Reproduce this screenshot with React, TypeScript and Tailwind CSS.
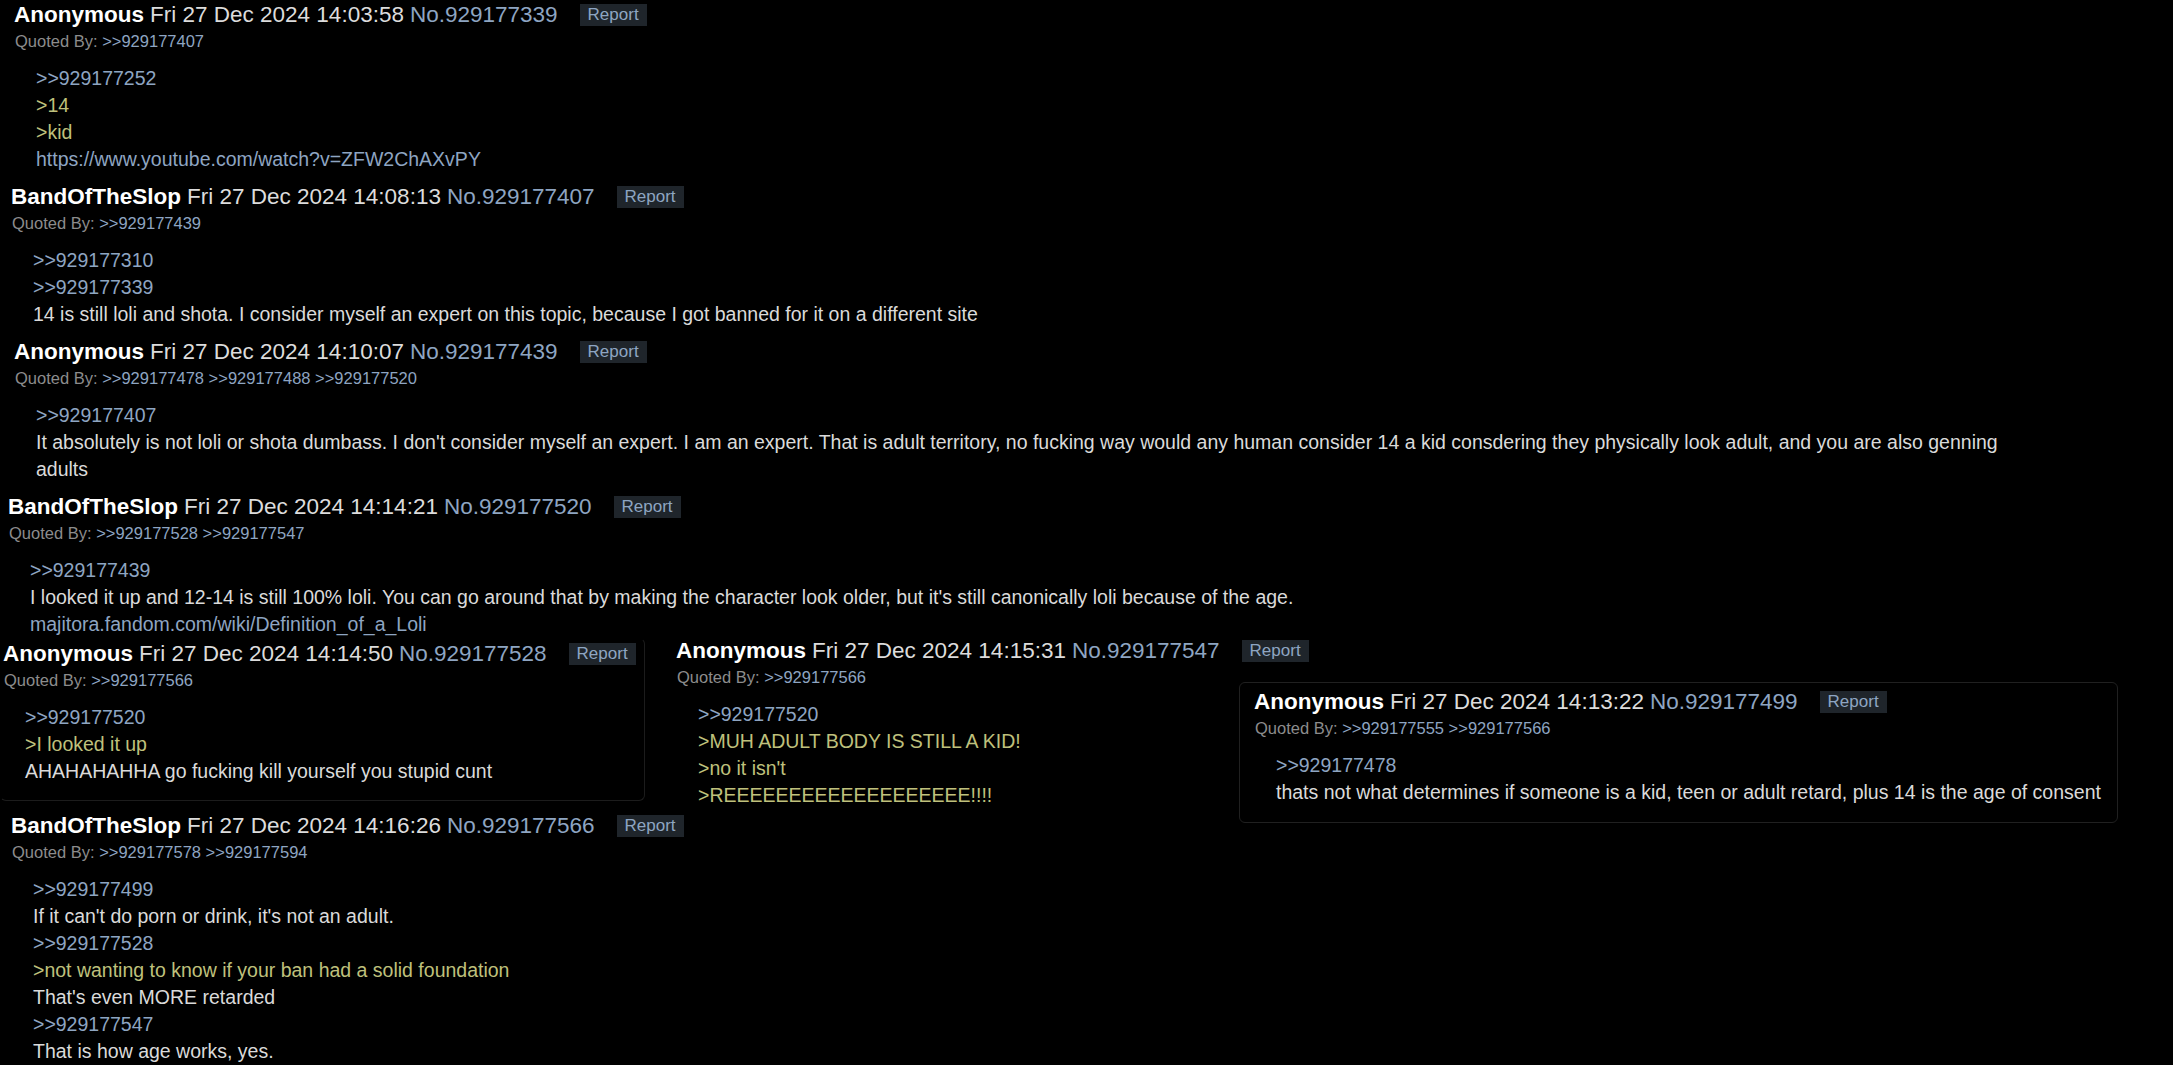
import React from 'react';

type Line = { k: 'q' | 'g' | 't' | 'l'; s: string };

type Post = {
  name: string;
  date: string;
  no: string;
  quotedBy: string[];
  lines: Line[];
};

const q = (s: string): Line => ({ k: 'q', s });
const g = (s: string): Line => ({ k: 'g', s });
const t = (s: string): Line => ({ k: 't', s });
const l = (s: string): Line => ({ k: 'l', s });

const posts: Record<string, Post> = {
  p339: {
    name: 'Anonymous',
    date: 'Fri 27 Dec 2024 14:03:58',
    no: '929177339',
    quotedBy: ['929177407'],
    lines: [q('>>929177252'), g('>14'), g('>kid'), l('https://www.youtube.com/watch?v=ZFW2ChAXvPY')],
  },
  p407: {
    name: 'BandOfTheSlop',
    date: 'Fri 27 Dec 2024 14:08:13',
    no: '929177407',
    quotedBy: ['929177439'],
    lines: [
      q('>>929177310'),
      q('>>929177339'),
      t('14 is still loli and shota. I consider myself an expert on this topic, because I got banned for it on a different site'),
    ],
  },
  p439: {
    name: 'Anonymous',
    date: 'Fri 27 Dec 2024 14:10:07',
    no: '929177439',
    quotedBy: ['929177478', '929177488', '929177520'],
    lines: [
      q('>>929177407'),
      t("It absolutely is not loli or shota dumbass. I don't consider myself an expert. I am an expert. That is adult territory, no fucking way would any human consider 14 a kid consdering they physically look adult, and you are also genning"),
      t('adults'),
    ],
  },
  p520: {
    name: 'BandOfTheSlop',
    date: 'Fri 27 Dec 2024 14:14:21',
    no: '929177520',
    quotedBy: ['929177528', '929177547'],
    lines: [
      q('>>929177439'),
      t("I looked it up and 12-14 is still 100% loli. You can go around that by making the character look older, but it's still canonically loli because of the age."),
      l('majitora.fandom.com/wiki/Definition_of_a_Loli'),
    ],
  },
  p528: {
    name: 'Anonymous',
    date: 'Fri 27 Dec 2024 14:14:50',
    no: '929177528',
    quotedBy: ['929177566'],
    lines: [q('>>929177520'), g('>I looked it up'), t('AHAHAHAHHA go fucking kill yourself you stupid cunt')],
  },
  p547: {
    name: 'Anonymous',
    date: 'Fri 27 Dec 2024 14:15:31',
    no: '929177547',
    quotedBy: ['929177566'],
    lines: [q('>>929177520'), g('>MUH ADULT BODY IS STILL A KID!'), g(">no it isn't"), g('>REEEEEEEEEEEEEEEEEEE!!!!')],
  },
  p499: {
    name: 'Anonymous',
    date: 'Fri 27 Dec 2024 14:13:22',
    no: '929177499',
    quotedBy: ['929177555', '929177566'],
    lines: [
      q('>>929177478'),
      t('thats not what determines if someone is a kid, teen or adult retard, plus 14 is the age of consent'),
    ],
  },
  p566: {
    name: 'BandOfTheSlop',
    date: 'Fri 27 Dec 2024 14:16:26',
    no: '929177566',
    quotedBy: ['929177578', '929177594'],
    lines: [
      q('>>929177499'),
      t("If it can't do porn or drink, it's not an adult."),
      q('>>929177528'),
      g('>not wanting to know if your ban had a solid foundation'),
      t("That's even MORE retarded"),
      q('>>929177547'),
      t('That is how age works, yes.'),
    ],
  },
};

const lineColor: Record<Line['k'], string> = {
  q: 'text-[#8ea5c2]',
  l: 'text-[#8ea5c2]',
  g: 'text-[#bfc07c]',
  t: 'text-[#dadada]',
};

function PostView({ post, className = '' }: { post: Post; className?: string }) {
  return (
    <div className={className}>
      <div className="flex h-[26px] items-center whitespace-nowrap text-[22.5px]">
        <span className="font-bold text-white">{post.name}</span>
        <span className="ml-[6px] text-[#dcdcdc]">{post.date}</span>
        <span className="ml-[6px] text-[#8ea5c2]">No.{post.no}</span>
        <span className="ml-[22px] bg-[#1f252b] px-[8px] text-[17px] leading-[22px] text-[#8ea5c2]">Report</span>
      </div>
      <div className="mt-[1px] whitespace-nowrap pl-[1px] text-[16.5px] leading-[24px]">
        <span className="text-[#8c8c8c]">Quoted By: </span>
        {post.quotedBy.map((id, i) => (
          <span key={id} className="text-[#8ea5c2]">
            {i > 0 ? ' ' : ''}&gt;&gt;{id}
          </span>
        ))}
      </div>
      <div className="mt-[12px] pl-[22px] text-[19.5px] leading-[27px]">
        {post.lines.map((ln, i) => (
          <div key={i} className={`whitespace-nowrap ${lineColor[ln.k]}`}>
            {ln.s}
          </div>
        ))}
      </div>
    </div>
  );
}

export default function App() {
  return (
    <div
      className="min-h-screen overflow-hidden bg-black pt-[2px]"
      style={{ fontFamily: '"Liberation Sans", Arial, sans-serif' }}
    >
      <PostView post={posts.p339} className="pb-[11px] pl-[14px]" />
      <PostView post={posts.p407} className="pb-[11px] pl-[11px]" />
      <PostView post={posts.p439} className="pb-[11px] pl-[14px]" />
      <PostView post={posts.p520} className="pl-[8px]" />

      <div className="flex items-start">
        <div className="w-[645px] shrink-0 rounded-md border border-[#1c1c1c] border-l-transparent border-t-transparent bg-black pb-[15px] pl-[2px] pt-[2px]">
          <PostView post={posts.p528} />
        </div>
        <PostView post={posts.p547} className="ml-[31px] w-[563px] shrink-0 pb-[4px]" />
        <div className="-mb-[10px] mt-[44px] w-[879px] shrink-0 rounded-md border border-[#202020] bg-black pb-[16px] pl-[14px] pt-[6px]">
          <PostView post={posts.p499} />
        </div>
      </div>

      <PostView post={posts.p566} className="pl-[11px]" />
    </div>
  );
}
